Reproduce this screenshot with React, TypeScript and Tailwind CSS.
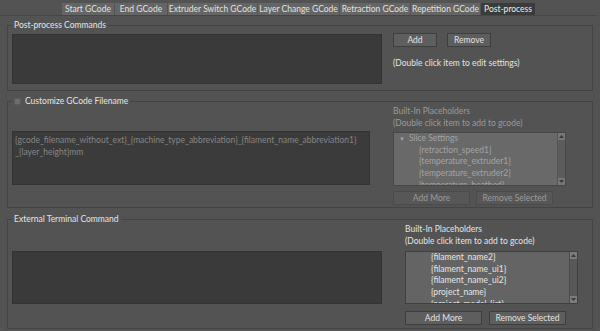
import React from 'react';

// Tab labels for the GCode settings page
const tabs = [
  { label: 'Start GCode', w: 52 },
  { label: 'End GCode', w: 52 },
  { label: 'Extruder Switch GCode', w: 89 },
  { label: 'Layer Change GCode', w: 81 },
  { label: 'Retraction GCode', w: 70 },
  { label: 'Repetition GCode', w: 69 },
  { label: 'Post-process', w: 54 },
];

const Arrow: React.FC<{ down?: boolean }> = ({ down }) => (
  <svg width="5" height="3" viewBox="0 0 5 3">
    {down ? <polygon points="0,0 5,0 2.5,3" fill="#3a3a3a" /> : <polygon points="0,3 5,3 2.5,0" fill="#3a3a3a" />}
  </svg>
);

const ScrollBar: React.FC<{ dim?: boolean }> = ({ dim }) => (
  <div className={`flex w-[8px] flex-col border-l ${dim ? 'border-[#555] bg-[#5c5c5c]' : 'border-[#4a4a4a] bg-[#585858]'}`}>
    <div className={`flex h-[7px] items-center justify-center ${dim ? 'bg-[#777]' : 'bg-[#7c7c7c]'}`}>
      <Arrow />
    </div>
    <div className="flex-1" />
    <div className={`flex h-[7px] items-center justify-center ${dim ? 'bg-[#777]' : 'bg-[#7c7c7c]'}`}>
      <Arrow down />
    </div>
  </div>
);

const Button: React.FC<{ label: string; w: number; dim?: boolean }> = ({ label, w, dim }) => (
  <div
    style={{ width: w }}
    className={`flex h-[14px] items-center justify-center border leading-none ${
      dim ? 'border-[#4b4b4b] bg-[#575757] text-[#9b9b9b]' : 'border-[#3e3e3e] bg-[#5e5e5e] text-[#e2e2e2]'
    }`}
  >
    {label}
  </div>
);

interface GroupProps {
  title: string;
  checkbox?: boolean;
  className: string;
  children: React.ReactNode;
}

const GroupBox: React.FC<GroupProps> = ({ title, checkbox, className, children }) => (
  <div className={`relative mx-[7px] border border-[#444] ${className}`}>
    <div className="absolute -top-[7px] left-[4px] flex items-center gap-[4px] bg-[#535353] px-[2px] leading-[12px] text-[#e4e4e4]">
      {checkbox && <span className="block h-[7px] w-[7px] border border-[#5a5a5a] bg-[#6c6c6c]" />}
      <span>{title}</span>
    </div>
    {children}
  </div>
);

export default function App() {
  return (
    <div
      className="h-[331px] w-[600px] overflow-hidden bg-[#535353] text-[8.5px] text-[#e4e4e4]"
      style={{ fontFamily: 'Lato, "Noto Sans", sans-serif' }}
    >
      {/* tab strip */}
      <div className="flex h-[16px] w-[597px] items-end gap-[1px] border-b border-[#464646] pl-[62px]">
        {tabs.map((t, i) => (
          <div
            key={t.label}
            style={{ width: t.w }}
            className={`flex h-[12px] items-center justify-center leading-none ${
              i === tabs.length - 1 ? 'bg-[#3b3b3b] text-[#ededed]' : 'bg-[#656565] text-[#e2e2e2]'
            }`}
          >
            {t.label}
          </div>
        ))}
      </div>

      {/* post-process commands */}
      <GroupBox title="Post-process Commands" className="mt-[9px] h-[66px]">
        <div className="flex pl-[4px]">
          <div className="mt-[8px] h-[50px] w-[370px] border border-[#333] bg-[#3a3a3a]" />
          <div className="ml-[11px] mt-[7px] flex flex-col">
            <div className="flex gap-[10px]">
              <Button label="Add" w={44} />
              <Button label="Remove" w={44} />
            </div>
            <div className="mt-[10px] leading-[12px]">(Double click item to edit settings)</div>
          </div>
        </div>
      </GroupBox>

      {/* customize gcode filename (disabled) */}
      <GroupBox title="Customize GCode Filename" checkbox className="mt-[10px] h-[107px]">
        <div className="flex pl-[4px]">
          <div className="mt-[29px] h-[54px] w-[358px] border border-[#333] bg-[#3b3b3b] px-[2px] pt-[2px] leading-[12px] text-[#858585]">
            {'{gcode_filename_without_ext}_{machine_type_abbreviation}_{filament_name_abbreviation1}'}
            <br />
            {'_{layer_height}mm'}
          </div>
          <div className="ml-[23px] mt-[3px] flex flex-col text-[#9a9a9a]">
            <div className="leading-[12px]">Built-In Placeholders</div>
            <div className="leading-[12px]">(Double click item to add to gcode)</div>
            <div className="mt-[3px] flex h-[54px] w-[173px] overflow-hidden border border-[#474747] bg-[#696969]">
              <div className="flex-1 leading-[11.7px] text-[#a3a3a3]">
                <div className="flex items-center">
                  <span className="ml-[5px] mr-[4px] text-[6px] leading-none">▼</span>
                  <span>Slice Settings</span>
                </div>
                <div className="pl-[25px]">{'{retraction_speed1}'}</div>
                <div className="pl-[25px]">{'{temperature_extruder1}'}</div>
                <div className="pl-[25px]">{'{temperature_extruder2}'}</div>
                <div className="pl-[25px]">{'{temperature_heatbed}'}</div>
              </div>
              <ScrollBar dim />
            </div>
            <div className="mt-[5px] flex gap-[6px]">
              <Button label="Add More" w={77} dim />
              <Button label="Remove Selected" w={77} dim />
            </div>
          </div>
        </div>
      </GroupBox>

      {/* external terminal command */}
      <GroupBox title="External Terminal Command" className="mt-[11px] h-[110px]">
        <div className="flex pl-[4px]">
          <div className="mt-[31px] h-[53px] w-[370px] border border-[#333] bg-[#3a3a3a]" />
          <div className="ml-[23px] mt-[3px] flex flex-col">
            <div className="leading-[12px]">Built-In Placeholders</div>
            <div className="leading-[12px]">(Double click item to add to gcode)</div>
            <div className="mt-[4px] flex h-[53px] w-[173px] overflow-hidden border border-[#404040] bg-[#646464]">
              <div className="flex-1 leading-[11.7px] text-[#e6e6e6]">
                <div className="pl-[25px]">{'{filament_name2}'}</div>
                <div className="pl-[25px]">{'{filament_name_ui1}'}</div>
                <div className="pl-[25px]">{'{filament_name_ui2}'}</div>
                <div className="pl-[25px]">{'{project_name}'}</div>
                <div className="pl-[25px]">{'{project_model_list}'}</div>
              </div>
              <ScrollBar />
            </div>
            <div className="mt-[7px] flex gap-[7px]">
              <Button label="Add More" w={77} />
              <Button label="Remove Selected" w={77} />
            </div>
          </div>
        </div>
      </GroupBox>
    </div>
  );
}
